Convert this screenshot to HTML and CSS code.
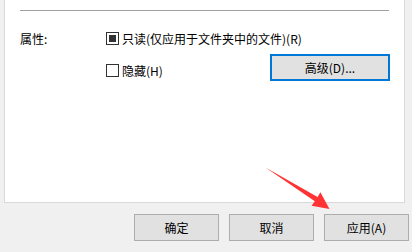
FILE: index.html
```html
<!DOCTYPE html>
<html lang="zh-CN">
<head>
<meta charset="utf-8">
<link rel="stylesheet" href="styles.css">
</head>
<body>
<div class="dialog">
  <div class="panel">
    <div class="sep"></div>
    <div class="attrs">
      <div class="label">属性:</div>
      <div class="opts">
        <div class="row">
          <span class="cb checked"><span class="dot"></span></span>
          <span class="cbtext">只读(仅应用于文件夹中的文件)(R)</span>
        </div>
        <div class="row row2">
          <span class="cb"></span>
          <span class="cbtext">隐藏(H)</span>
          <button class="btn adv">高级(D)...</button>
        </div>
      </div>
    </div>
  </div>
  <div class="footer">
    <button class="btn">确定</button>
    <button class="btn">取消</button>
    <button class="btn">应用(A)</button>
  </div>
  <svg class="arrow" width="412" height="252" viewBox="0 0 412 252">
    <polygon fill="#ff3333" points="265.5,167.5 317.6,197.0 320.4,192.3 329.5,209 311.6,205.7 314.8,201.2"/>
  </svg>
</div>
</body>
</html>
```
FILE: styles.css
```css
html, body {
  margin: 0;
  padding: 0;
  background: #f0f0f0;
}
body {
  font-family: "Noto Sans CJK SC", "Microsoft YaHei", sans-serif;
  font-size: 12px;
  color: #000;
  width: 412px;
  height: 252px;
  overflow: hidden;
}
.dialog {
  position: relative;
  width: 412px;
  height: 252px;
}
.panel {
  margin-left: 4px;
  width: 401px;
  height: 203px;
  background: #fff;
  border: 1px solid #d9d9d9;
  border-top: none;
  box-sizing: border-box;
  padding-top: 10px;
}
.sep {
  height: 1px;
  background: #a0a0a0;
  margin: 0 15px 0 15px;
}
.attrs {
  display: flex;
  margin-top: 21px;
  padding-left: 15px;
}
.label {
  width: 86px;
  line-height: 13px;
  height: 13px;
}
.opts {
  display: flex;
  flex-direction: column;
}
.row {
  display: flex;
  align-items: center;
  height: 13px;
}
.row2 {
  margin-top: 9px;
  height: 27px;
  align-items: flex-start;
}
.row2 .cb,
.row2 .cbtext {
  margin-top: 10px;
}
.cb {
  width: 13px;
  height: 13px;
  border: 1px solid #333;
  box-sizing: border-box;
  display: flex;
  align-items: center;
  justify-content: center;
  background: #fff;
  flex: none;
}
.cb .dot {
  width: 7px;
  height: 7px;
  background: #333;
}
.cbtext {
  margin-left: 3px;
  line-height: 13px;
  white-space: nowrap;
}
.row2 .cbtext {
  width: 148px;
}
.btn {
  font-family: "Noto Sans CJK SC", "Microsoft YaHei", sans-serif;
  font-size: 12px;
  color: #000;
  background: #e1e1e1;
  border: 1px solid #adadad;
  width: 85px;
  height: 27px;
  padding: 0;
  margin: 0;
  box-sizing: border-box;
}
.adv {
  width: 120px;
  border: 2px solid #0078d7;
}
.footer {
  display: flex;
  justify-content: flex-end;
  gap: 10px;
  padding-right: 3px;
  margin-top: 11px;
}
.arrow {
  position: absolute;
  left: 0;
  top: 0;
  pointer-events: none;
}
```
